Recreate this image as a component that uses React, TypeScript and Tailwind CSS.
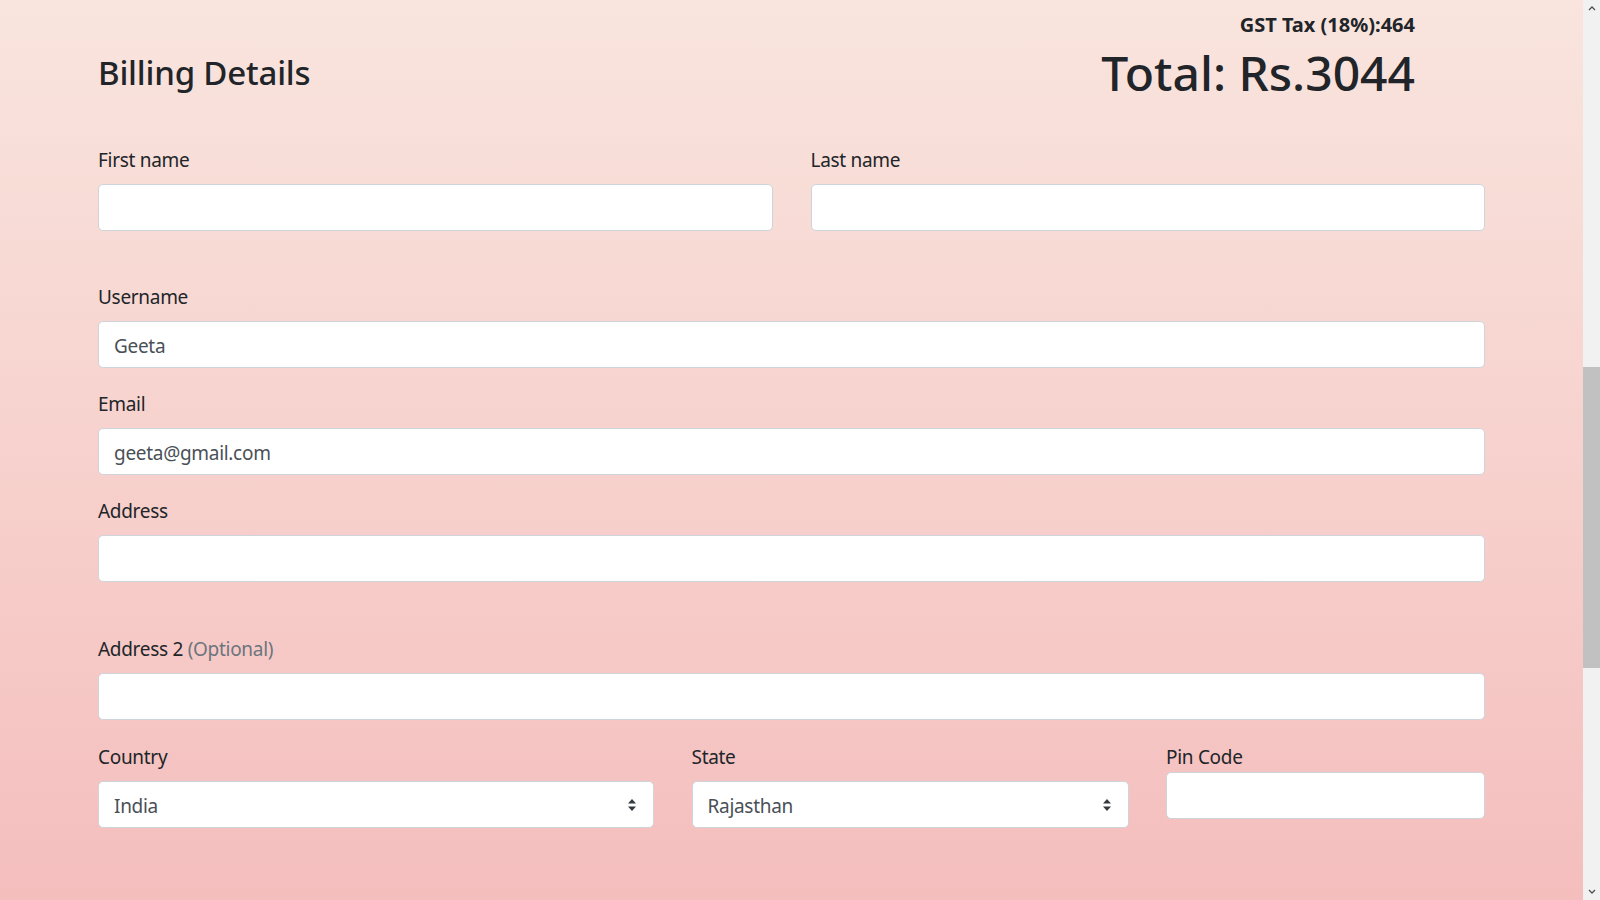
import React from "react";

const font = { fontFamily: '"Noto Sans", "Open Sans", sans-serif' };

function Label({ children }: { children: React.ReactNode }) {
  return (
    <label className="block text-[19px] tracking-[-0.3px] leading-[30px] text-[#212529] mb-[9px]">{children}</label>
  );
}

function Input({ value = "" }: { value?: string }) {
  return (
    <div className="h-[47px] w-full bg-white border border-[#ced4da] rounded-[5px] flex items-center px-[15px] pt-[3px] text-[19px] tracking-[-0.3px] text-[#495057]">
      {value}
    </div>
  );
}

function Select({ value }: { value: string }) {
  return (
    <div className="h-[47px] w-full bg-white border border-[#ced4da] rounded-[5px] flex items-center justify-between pl-[15px] pr-[16px] text-[19px] tracking-[-0.3px] text-[#495057]">
      <span className="pt-[3px]">{value}</span>
      <svg width="10" height="14" viewBox="0 0 10 14">
        <path d="M5 1 L9 5.5 L1 5.5 Z" fill="#343a40" />
        <path d="M5 13 L9 8.5 L1 8.5 Z" fill="#343a40" />
      </svg>
    </div>
  );
}

export default function App() {
  return (
    <div className="flex w-full h-[900px] overflow-hidden" style={font}>
      <div className="flex-1 h-full bg-gradient-to-b from-[#f9e5de] to-[#f4bebd]">
        <div className="w-[1387px] mx-auto">
          <div className="flex items-end justify-between pt-[13px]">
            <h3 className="text-[33px] tracking-[-0.2px] leading-[60px] font-medium text-[#212529]">Billing Details</h3>
            <div className="flex flex-col items-end pr-[70px]">
              <div className="text-[20px] leading-[24px] font-bold text-[#212529]">GST Tax (18%):464</div>
              <div className="text-[48px] leading-[60px] font-medium text-[#212529] mt-[6px]">Total: Rs.3044</div>
            </div>
          </div>

          <div className="grid grid-cols-2 gap-x-[38px] mt-[42px] mb-[51px]">
            <div>
              <Label>First name</Label>
              <Input />
            </div>
            <div>
              <Label>Last name</Label>
              <Input />
            </div>
          </div>

          <div className="mb-[21px]">
            <Label>Username</Label>
            <Input value="Geeta" />
          </div>
          <div className="mb-[21px]">
            <Label>Email</Label>
            <Input value="geeta@gmail.com" />
          </div>
          <div className="mb-[52px]">
            <Label>Address</Label>
            <Input />
          </div>
          <div className="mb-[22px]">
            <Label>
              Address 2 <span className="text-[#6c757d]">(Optional)</span>
            </Label>
            <Input />
          </div>

          <div className="grid grid-cols-[556px_437px_1fr] gap-x-[37.5px]">
            <div>
              <Label>Country</Label>
              <Select value="India" />
            </div>
            <div>
              <Label>State</Label>
              <Select value="Rajasthan" />
            </div>
            <div>
              <label className="block text-[19px] tracking-[-0.3px] leading-[30px] text-[#212529]">Pin Code</label>
              <Input />
            </div>
          </div>
        </div>
      </div>
      <div className="w-[17px] h-full bg-[#f1f1f1] flex flex-col">
        <div className="h-[17px] flex items-center justify-center">
          <svg width="8" height="5" viewBox="0 0 8 5">
            <path d="M1 4 L4 1 L7 4" stroke="#505050" strokeWidth="1.3" fill="none" />
          </svg>
        </div>
        <div className="h-[350px]" />
        <div className="h-[301px] bg-[#c1c1c1]" />
        <div className="flex-1" />
        <div className="h-[17px] flex items-center justify-center">
          <svg width="8" height="5" viewBox="0 0 8 5">
            <path d="M1 1 L4 4 L7 1" stroke="#505050" strokeWidth="1.3" fill="none" />
          </svg>
        </div>
      </div>
    </div>
  );
}
